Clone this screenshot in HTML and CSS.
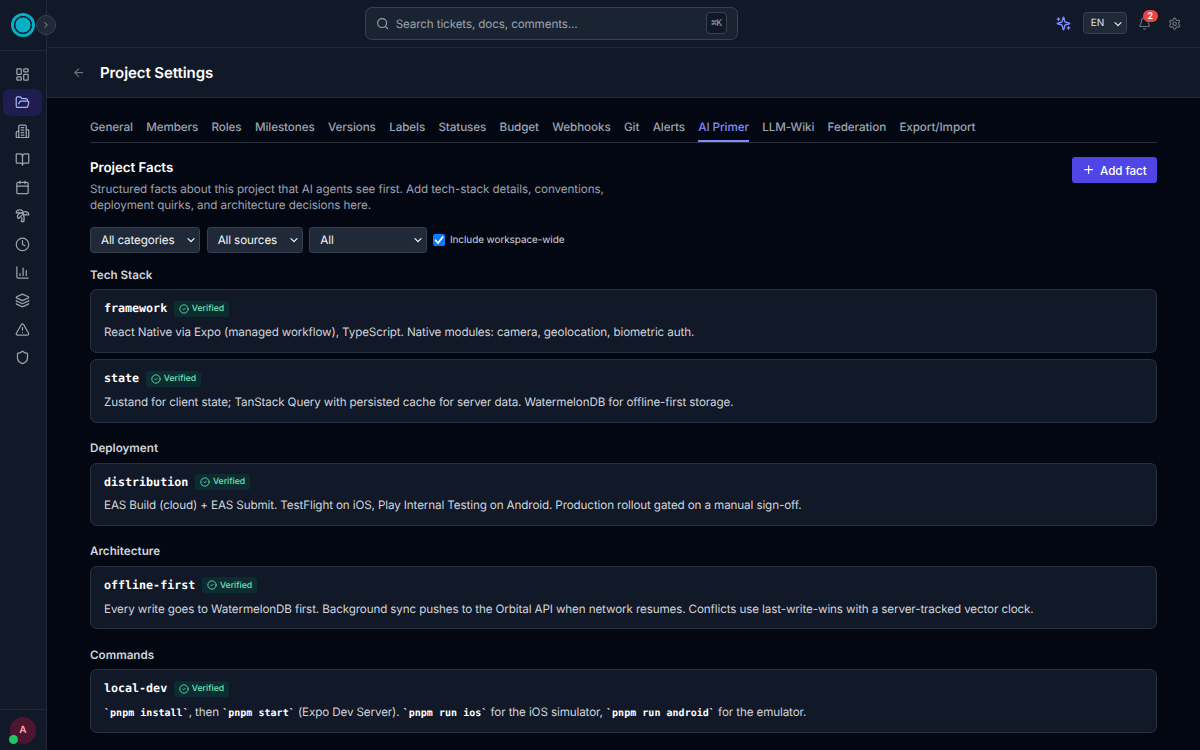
FILE: index.html
```html
<!DOCTYPE html>
<html lang="en">
<head>
    <meta charset="UTF-8">
    <meta name="viewport" content="width=device-width, initial-scale=1.0">
    <title>Project Settings</title>
    <link rel="stylesheet" href="styles.css">
</head>
<body>
    <!-- Shared icons -->
    <svg class="sprite">
        <symbol id="icon-check" viewBox="0 0 24 24"><circle cx="12" cy="12" r="10"/><path d="m9 12 2 2 4-4"/></symbol>
        <symbol id="icon-chevron" viewBox="0 0 24 24"><path d="m3 8 9 9 9-9"/></symbol>
    </svg>

    <aside class="sidebar">
        <div class="sidebar-top">
            <span class="logo"></span>
            <button class="expand"><svg class="icon" viewBox="0 0 24 24"><path d="m9 18 6-6-6-6"/></svg></button>
        </div>
        <nav class="sidebar-nav">
            <a class="nav-item"><svg class="icon" viewBox="0 0 24 24"><rect width="7" height="9" x="3" y="3" rx="1"/><rect width="7" height="5" x="14" y="3" rx="1"/><rect width="7" height="9" x="14" y="12" rx="1"/><rect width="7" height="5" x="3" y="16" rx="1"/></svg></a>
            <a class="nav-item active"><svg class="icon" viewBox="0 0 24 24"><path d="m6 14 1.5-2.9A2 2 0 0 1 9.24 10H20a2 2 0 0 1 1.94 2.5l-1.54 6a2 2 0 0 1-1.95 1.5H4a2 2 0 0 1-2-2V5a2 2 0 0 1 2-2h3.9a2 2 0 0 1 1.69.9l.81 1.2a2 2 0 0 0 1.67.9H18a2 2 0 0 1 2 2v2"/></svg></a>
            <a class="nav-item"><svg class="icon" viewBox="0 0 24 24"><path d="M6 22V4a2 2 0 0 1 2-2h8a2 2 0 0 1 2 2v18Z"/><path d="M6 12H4a2 2 0 0 0-2 2v6a2 2 0 0 0 2 2h2"/><path d="M18 9h2a2 2 0 0 1 2 2v9a2 2 0 0 1-2 2h-2"/><path d="M10 6h4M10 10h4M10 14h4M10 18h4"/></svg></a>
            <a class="nav-item"><svg class="icon" viewBox="0 0 24 24"><path d="M12 7v14"/><path d="M3 18a1 1 0 0 1-1-1V4a1 1 0 0 1 1-1h5a4 4 0 0 1 4 4 4 4 0 0 1 4-4h5a1 1 0 0 1 1 1v13a1 1 0 0 1-1 1h-6a3 3 0 0 0-3 3 3 3 0 0 0-3-3z"/></svg></a>
            <a class="nav-item"><svg class="icon" viewBox="0 0 24 24"><path d="M8 2v4M16 2v4"/><rect width="18" height="18" x="3" y="4" rx="2"/><path d="M3 10h18"/></svg></a>
            <a class="nav-item"><svg class="icon" viewBox="0 0 24 24"><path d="M13 8c0-2.76-2.46-5-5.5-5S2 5.24 2 8h2l1-1 1 1h4"/><path d="M13 7.14A5.82 5.82 0 0 1 16.5 6c3.04 0 5.5 2.24 5.5 5h-3l-1-1-1 1h-3"/><path d="M5.89 9.71c-2.15 2.15-2.3 5.47-.35 7.43l4.24-4.25.7-.7.71-.71 2.12-2.12c-1.95-1.96-5.27-1.8-7.42.35"/><path d="M11 15.5c.5 2.5-.17 4.5-1 6.5h4c2-5.5-.5-12-1-14"/></svg></a>
            <a class="nav-item"><svg class="icon" viewBox="0 0 24 24"><circle cx="12" cy="12" r="10"/><path d="M12 6v6l4 2"/></svg></a>
            <a class="nav-item"><svg class="icon" viewBox="0 0 24 24"><path d="M3 3v16a2 2 0 0 0 2 2h16"/><path d="M18 17V9M13 17V5M8 17v-3"/></svg></a>
            <a class="nav-item"><svg class="icon" viewBox="0 0 24 24"><path d="M12.83 2.18a2 2 0 0 0-1.66 0L2.6 6.08a1 1 0 0 0 0 1.83l8.58 3.91a2 2 0 0 0 1.66 0l8.58-3.9a1 1 0 0 0 0-1.83z"/><path d="M2 12a1 1 0 0 0 .58.91l8.6 3.91a2 2 0 0 0 1.65 0l8.58-3.9A1 1 0 0 0 22 12"/><path d="M2 17a1 1 0 0 0 .58.91l8.6 3.91a2 2 0 0 0 1.65 0l8.58-3.9A1 1 0 0 0 22 17"/></svg></a>
            <a class="nav-item"><svg class="icon" viewBox="0 0 24 24"><path d="m21.73 18-8-14a2 2 0 0 0-3.48 0l-8 14A2 2 0 0 0 4 21h16a2 2 0 0 0 1.73-3"/><path d="M12 9v4M12 17h.01"/></svg></a>
            <a class="nav-item"><svg class="icon" viewBox="0 0 24 24"><path d="M20 13c0 5-3.5 7.5-7.66 8.95a1 1 0 0 1-.67-.01C7.5 20.5 4 18 4 13V6a1 1 0 0 1 1-1c2 0 4.5-1.2 6.24-2.72a1.17 1.17 0 0 1 1.52 0C14.51 3.81 17 5 19 5a1 1 0 0 1 1 1z"/></svg></a>
        </nav>
        <div class="sidebar-user">
            <div class="avatar">A<span class="online"></span></div>
        </div>
    </aside>

    <div class="page">
        <header class="topbar">
            <div class="search">
                <svg class="icon" viewBox="0 0 24 24"><circle cx="11" cy="11" r="8"/><path d="m21 21-4.3-4.3"/></svg>
                <span>Search tickets, docs, comments...</span>
                <kbd>⌘K</kbd>
            </div>
            <div class="topbar-actions">
                <svg class="icon sparkles" viewBox="0 0 24 24"><path d="M9.94 15.5A2 2 0 0 0 8.5 14.06l-6.14-1.58a.5.5 0 0 1 0-.96L8.5 9.94A2 2 0 0 0 9.94 8.5l1.58-6.14a.5.5 0 0 1 .96 0l1.58 6.14a2 2 0 0 0 1.44 1.44l6.14 1.58a.5.5 0 0 1 0 .96l-6.14 1.58a2 2 0 0 0-1.44 1.44l-1.58 6.14a.5.5 0 0 1-.96 0z"/><path d="M4 3v4M2 5h4M20 17v4M22 19h-4"/></svg>
                <div class="lang">EN <svg class="icon"><use href="#icon-chevron"/></svg></div>
                <div class="bell">
                    <svg class="icon" viewBox="0 0 24 24"><path d="M10.27 21a2 2 0 0 0 3.46 0"/><path d="M3.26 15.33A1 1 0 0 0 4 17h16a1 1 0 0 0 .74-1.67C19.41 13.96 18 12.5 18 8A6 6 0 0 0 6 8c0 4.5-1.41 5.96-2.74 7.33"/></svg>
                    <span class="count">2</span>
                </div>
                <svg class="icon gear" viewBox="0 0 24 24"><path d="M12.22 2h-.44a2 2 0 0 0-2 2v.18a2 2 0 0 1-1 1.73l-.43.25a2 2 0 0 1-2 0l-.15-.08a2 2 0 0 0-2.73.73l-.22.38a2 2 0 0 0 .73 2.73l.15.1a2 2 0 0 1 1 1.72v.51a2 2 0 0 1-1 1.74l-.15.09a2 2 0 0 0-.73 2.73l.22.38a2 2 0 0 0 2.73.73l.15-.08a2 2 0 0 1 2 0l.43.25a2 2 0 0 1 1 1.73V20a2 2 0 0 0 2 2h.44a2 2 0 0 0 2-2v-.18a2 2 0 0 1 1-1.73l.43-.25a2 2 0 0 1 2 0l.15.08a2 2 0 0 0 2.73-.73l.22-.39a2 2 0 0 0-.73-2.73l-.15-.08a2 2 0 0 1-1-1.74v-.5a2 2 0 0 1 1-1.74l.15-.09a2 2 0 0 0 .73-2.73l-.22-.38a2 2 0 0 0-2.73-.73l-.15.08a2 2 0 0 1-2 0l-.43-.25a2 2 0 0 1-1-1.73V4a2 2 0 0 0-2-2z"/><circle cx="12" cy="12" r="3"/></svg>
            </div>
        </header>

        <div class="page-header">
            <svg class="icon" viewBox="0 0 24 24"><path d="m12 19-7-7 7-7M19 12H5"/></svg>
            <h1>Project Settings</h1>
        </div>

        <main class="content">
            <nav class="tabs">
                <a>General</a>
                <a>Members</a>
                <a>Roles</a>
                <a>Milestones</a>
                <a>Versions</a>
                <a>Labels</a>
                <a>Statuses</a>
                <a>Budget</a>
                <a>Webhooks</a>
                <a>Git</a>
                <a>Alerts</a>
                <a class="active">AI Primer</a>
                <a>LLM-Wiki</a>
                <a>Federation</a>
                <a>Export/Import</a>
            </nav>

            <div class="intro">
                <div>
                    <h2>Project Facts</h2>
                    <p>Structured facts about this project that AI agents see first. Add tech-stack details, conventions, deployment quirks, and architecture decisions here.</p>
                </div>
                <button class="add-button"><svg class="icon" viewBox="0 0 24 24"><path d="M5 12h14M12 5v14"/></svg><span>Add fact</span></button>
            </div>

            <div class="filters">
                <div class="select categories"><span>All categories</span><svg class="icon"><use href="#icon-chevron"/></svg></div>
                <div class="select sources"><span>All sources</span><svg class="icon"><use href="#icon-chevron"/></svg></div>
                <div class="select status"><span>All</span><svg class="icon"><use href="#icon-chevron"/></svg></div>
                <div class="check-label">
                    <span class="checkbox"><svg class="icon" viewBox="0 0 24 24"><path d="m5 12.5 5 5.5L19.500 6"/></svg></span>
                    <span class="check-text">Include workspace-wide</span>
                </div>
            </div>

            <section class="group">
                <h3>Tech Stack</h3>
                <article class="fact">
                    <div class="fact-head"><span class="key">framework</span><span class="badge"><svg class="icon"><use href="#icon-check"/></svg><span>Verified</span></span></div>
                    <p>React Native via Expo (managed workflow), TypeScript. Native modules: camera, geolocation, biometric auth.</p>
                </article>
                <article class="fact">
                    <div class="fact-head"><span class="key">state</span><span class="badge"><svg class="icon"><use href="#icon-check"/></svg><span>Verified</span></span></div>
                    <p>Zustand for client state; TanStack Query with persisted cache for server data. WatermelonDB for offline-first storage.</p>
                </article>
            </section>

            <section class="group">
                <h3>Deployment</h3>
                <article class="fact">
                    <div class="fact-head"><span class="key">distribution</span><span class="badge"><svg class="icon"><use href="#icon-check"/></svg><span>Verified</span></span></div>
                    <p>EAS Build (cloud) + EAS Submit. TestFlight on iOS, Play Internal Testing on Android. Production rollout gated on a manual sign-off.</p>
                </article>
            </section>

            <section class="group">
                <h3>Architecture</h3>
                <article class="fact">
                    <div class="fact-head"><span class="key">offline-first</span><span class="badge"><svg class="icon"><use href="#icon-check"/></svg><span>Verified</span></span></div>
                    <p>Every write goes to WatermelonDB first. Background sync pushes to the Orbital API when network resumes. Conflicts use last-write-wins with a server-tracked vector clock.</p>
                </article>
            </section>

            <section class="group">
                <h3>Commands</h3>
                <article class="fact">
                    <div class="fact-head"><span class="key">local-dev</span><span class="badge"><svg class="icon"><use href="#icon-check"/></svg><span>Verified</span></span></div>
                    <p><code>`pnpm install`</code>, then <code>`pnpm start`</code> (Expo Dev Server). <code>`pnpm run ios`</code> for the iOS simulator, <code>`pnpm run android`</code> for the emulator.</p>
                </article>
            </section>
        </main>
    </div>
</body>
</html>
```
FILE: styles.css
```css
* {
    box-sizing: border-box;
    margin: 0;
    padding: 0;
}

html {
    font-size: 13.3333px; /* compact scale, everything below is in rem */
}

body {
    display: flex;
    height: 100vh;
    overflow: hidden;
    font-family: Inter, "Liberation Sans", sans-serif;
    font-size: 0.875rem;
    line-height: 1.25rem;
    letter-spacing: -0.125px;
    text-rendering: geometricPrecision;
    background-color: #030712;
    color: #d1d5db;
}

.sprite {
    display: none;
}

.icon {
    display: block;
    flex-shrink: 0;
    width: 1rem;
    height: 1rem;
    fill: none;
    stroke: currentColor;
    stroke-width: 2;
    stroke-linecap: round;
    stroke-linejoin: round;
}

button {
    font: inherit;
    letter-spacing: inherit;
    border: none;
}

/* Sidebar */
.sidebar {
    display: flex;
    flex-direction: column;
    flex-shrink: 0;
    width: 3.5rem;
    background-color: #111827;
    border-right: 1px solid #1f2937;
}

.sidebar-top {
    position: relative;
    display: flex;
    align-items: center;
    justify-content: center;
    height: 3.8rem;
    border-bottom: 1px solid #1f2937;
}

.logo {
    width: 24px;
    height: 24px;
    border-radius: 50%;
    background: radial-gradient(circle, #06b0c4 7.2px, #10283a 7.8px, #10283a 8.8px, #06b0c4 9.4px);
}

.expand {
    position: absolute;
    right: -10px;
    top: 15px;
    display: flex;
    align-items: center;
    justify-content: center;
    width: 20px;
    height: 20px;
    border-radius: 50%;
    border: 1px solid #374151;
    background-color: #1f2937;
    color: #9ca3af;
}

.expand .icon {
    width: 10px;
    height: 10px;
}

.sidebar-nav {
    display: flex;
    flex-direction: column;
    flex: 1;
    gap: 0.125rem;
    padding: 0.78rem 0.25rem;
}

.nav-item {
    display: flex;
    align-items: center;
    justify-content: center;
    height: 2rem;
    border-radius: 0.5rem;
    color: #9ca3af;
}

.nav-item .icon {
    width: 1.125rem;
    height: 1.125rem;
}

.nav-item.active {
    background-color: #1f1d50;
    color: #a5b4fc;
}

.sidebar-user {
    display: flex;
    justify-content: center;
    padding: 7px 0 6px;
    border-top: 1px solid #1f2937;
}

.avatar {
    position: relative;
    width: 2rem;
    height: 2rem;
    border-radius: 50%;
    background-color: #4c1530;
    color: #fda4af;
    font-size: 0.75rem;
    font-weight: 600;
    line-height: 2rem;
    text-align: center;
}

.online {
    position: absolute;
    left: -1px;
    bottom: 0;
    width: 9px;
    height: 9px;
    border-radius: 50%;
    background-color: #22c55e;
}

/* Top bar */
.page {
    display: flex;
    flex-direction: column;
    flex: 1;
    min-width: 0;
}

.topbar {
    display: flex;
    align-items: center;
    justify-content: space-between;
    flex-shrink: 0;
    height: 3.575rem;
    padding: 0 18.6px 0 318px;
    background-color: #111827;
    border-bottom: 1px solid #1f2937;
}

.search {
    display: flex;
    align-items: center;
    gap: 0.5rem;
    width: 28rem;
    height: 2.5rem;
    padding: 0 10px;
    border: 1px solid #374151;
    border-radius: 0.5rem;
    background-color: #1a2332;
    color: #9ca3af;
}

.search span {
    padding-top: 2px;
}

.search kbd {
    margin-left: auto;
    height: 22px;
    padding: 0 4px;
    border: 1px solid #374151;
    border-radius: 4px;
    background-color: #111827;
    font-family: "DejaVu Sans Mono", monospace;
    font-size: 9.2px;
    line-height: 21px;
}

.topbar-actions {
    display: flex;
    align-items: center;
    color: #6b7280;
}

.sparkles {
    width: 15px;
    height: 15px;
    stroke-width: 2.2;
    color: #818cf8;
}

.lang {
    display: flex;
    align-items: center;
    justify-content: space-between;
    width: 44px;
    height: 22px;
    margin: 0 11.5px 0 12px;
    padding: 1px 4px 0 7px;
    border: 1px solid #374151;
    border-radius: 4px;
    background-color: #1f2937;
    color: #e5e7eb;
    font-size: 0.75rem;
    line-height: 21px;
}

.lang .icon,
.select .icon {
    width: 8px;
    height: 8px;
    stroke-width: 3.8;
}

.bell {
    position: relative;
    margin-right: 16.4px;
}

.count {
    position: absolute;
    top: -7px;
    right: -6px;
    width: 15px;
    height: 12px;
    border-radius: 6px;
    background-color: #ef4444;
    color: #fff;
    font-size: 9px;
    font-weight: 600;
    line-height: 13px;
    text-align: center;
}

/* Page header */
.page-header {
    display: flex;
    align-items: center;
    flex-shrink: 0;
    gap: 15px;
    height: 50.3px;
    padding-left: 25px;
    background-color: #111827;
    border-bottom: 1px solid #1f2937;
    color: #6b7280;
}

.page-header h1 {
    padding-top: 2px;
    color: #fff;
    font-size: 1.125rem;
    font-weight: 600;
    letter-spacing: -0.08px;
}

.content {
    width: 80rem;
    margin: 0 auto;
    padding-top: 21px;
}

/* Tabs */
.tabs {
    display: flex;
    gap: 1rem;
    height: 24.5px;
    border-bottom: 1px solid #2b313d;
    font-weight: 500;
    letter-spacing: -0.09px;
    color: #9ca3af;
}

.tabs .active {
    color: #818cf8;
    border-bottom: 2px solid #818cf8;
}

.intro {
    display: flex;
    align-items: flex-start;
    justify-content: space-between;
    margin-top: 1rem;
}

.intro h2 {
    padding-top: 1px;
    color: #fff;
    font-size: 1rem;
    font-weight: 600;
    line-height: 1.5rem;
    letter-spacing: -0.05px;
}

.intro p {
    max-width: 42rem;
    margin-top: 3px;
    color: #9ca3af;
    letter-spacing: -0.09px;
}

.add-button {
    display: flex;
    align-items: center;
    gap: 5px;
    height: 2rem;
    padding: 0 10px;
    border-radius: 0.25rem;
    background-color: #4f46e5;
    color: #fff;
    font-weight: 500;
    letter-spacing: -0.08px;
}

.add-button span,
.select span,
.check-text {
    padding-top: 1.5px;
}

/* Filters */
.filters {
    display: flex;
    align-items: center;
    gap: 0.5rem;
    margin-top: 12.7px;
}

.select {
    display: flex;
    align-items: center;
    justify-content: space-between;
    height: 26px;
    padding: 0 4px 0 10px;
    border: 1px solid #374151;
    border-radius: 0.25rem;
    background-color: #1f2937;
    color: #f3f4f6;
}

.categories {
    width: 110px;
}

.sources {
    width: 96px;
}

.status {
    width: 117.5px;
}

.check-label {
    display: flex;
    align-items: center;
    gap: 4.5px;
    font-size: 0.75rem;
    letter-spacing: -0.09px;
}

.checkbox {
    width: 12px;
    height: 12px;
    border-radius: 2px;
    background-color: #0a7aff;
    color: #fff;
}

.checkbox .icon {
    width: 12px;
    height: 12px;
    stroke-width: 3.5;
}

/* Facts */
.group {
    display: flex;
    flex-direction: column;
    gap: 0.5rem;
    margin-top: 1.25rem;
}

.filters + .group {
    margin-top: 1rem;
}

.group h3 {
    height: 1.25rem;
    padding-top: 0.5px;
    font-size: 0.875rem;
    font-weight: 600;
    letter-spacing: 0;
}

.fact {
    height: 4.75rem;
    padding: 10px 13px;
    border: 1px solid #283243;
    border-radius: 0.5rem;
    background-color: #111827;
}

.fact-head {
    display: flex;
    align-items: center;
    gap: 0.5rem;
}

.key {
    color: #fff;
    font-family: "DejaVu Sans Mono", monospace;
    font-weight: 700;
    letter-spacing: 0;
}

.badge {
    display: flex;
    align-items: center;
    gap: 3px;
    height: 16px;
    padding: 0 5px;
    border-radius: 3px;
    background-color: #0b2c30;
    color: #6ee7b7;
    font-size: 0.65rem;
    font-weight: 500;
    letter-spacing: 0;
}

.badge span {
    padding-top: 1px;
}

.badge .icon {
    width: 10px;
    height: 10px;
}

.fact p {
    margin-top: 7px;
}

.fact code {
    color: #fff;
    font-family: "DejaVu Sans Mono", monospace;
    font-size: 0.75rem;
    font-weight: 700;
    letter-spacing: 0.04px;
}
```
